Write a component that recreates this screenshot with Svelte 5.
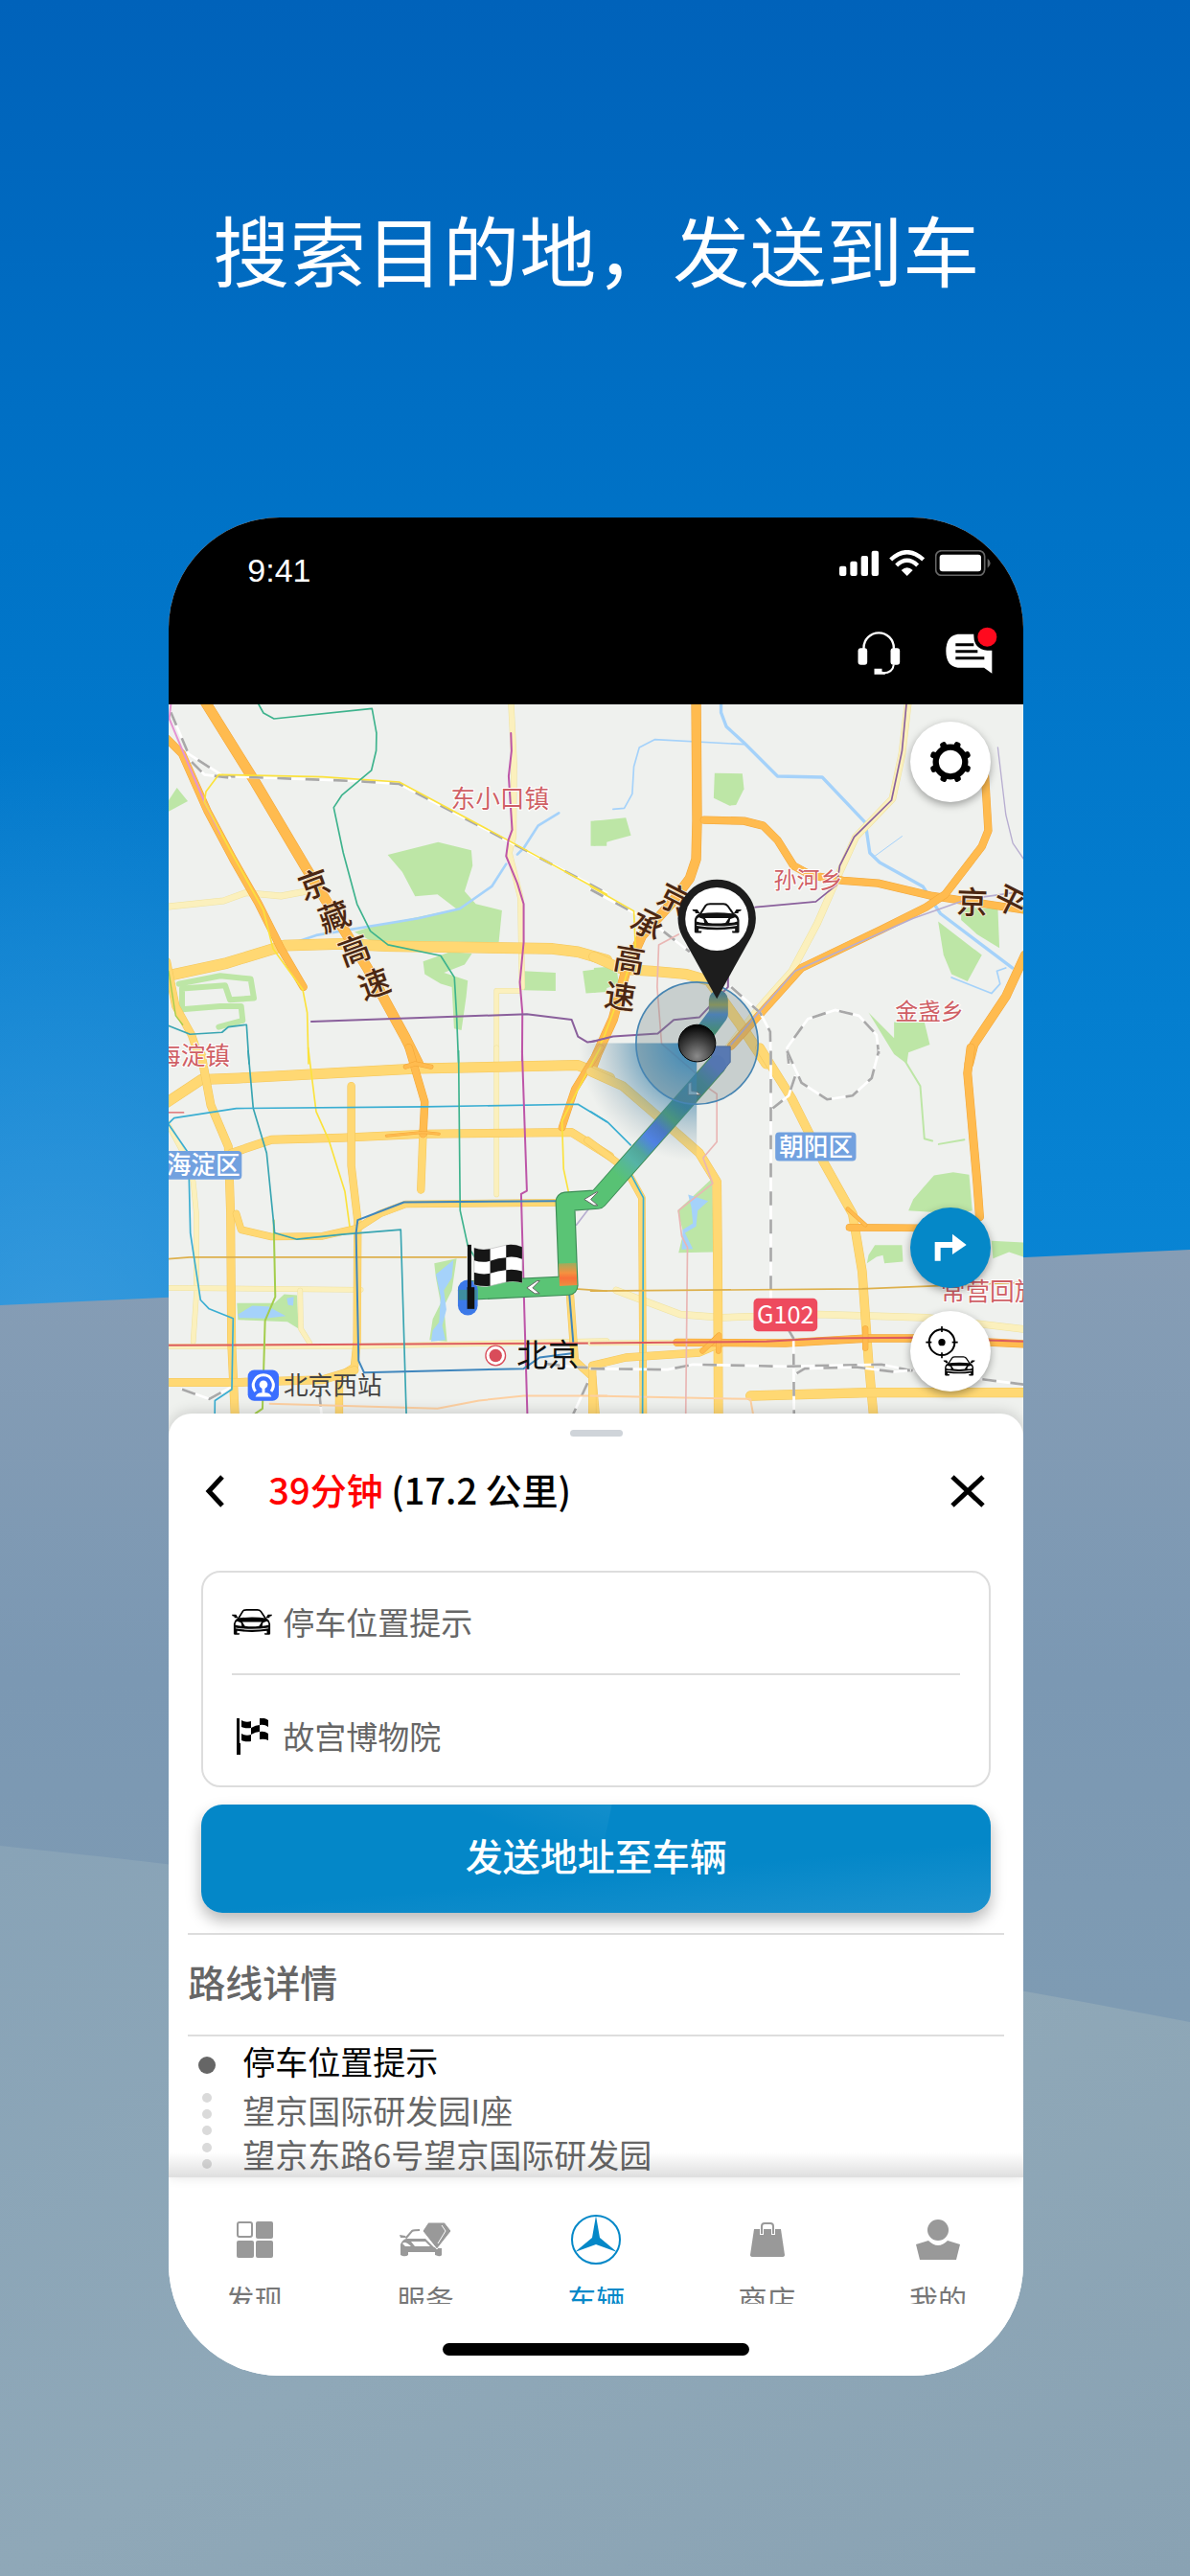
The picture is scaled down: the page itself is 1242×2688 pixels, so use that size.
<script>
let origin = $state('停车位置提示');
let destination = $state('故宫博物院');
let activeTab = $state('car');

const stops = [
     {
          title: '停车位置提示',
          lines: ['望京国际研发园I座', '望京东路6号望京国际研发园']
     }
];

const tabs = [
     { id: 'discover', label: '发现' },
     { id: 'service', label: '服务' },
     { id: 'car', label: '车辆' },
     { id: 'shop', label: '商店' },
     { id: 'me', label: '我的' }
];

// stroke colour and default width of every kind of line on the map
const kinds = {
     water: ['#a5d2fa', 8],
     park: ['#bde6a6', 8],
     pale: ['#fbf0bd', 18],
     main: ['#ffd873', 30],
     highway: ['#ffbb4f', 28],
     rail: ['#ffffff', 8],
     yellow: ['#fbe23c', 5],
     green: ['#3eb38d', 5],
     lime: ['#a3cd4c', 6],
     teal: ['#38a5b2', 5],
     cyan: ['#3aaed2', 5],
     blue: ['#3f86bd', 7],
     magenta: ['#bd55a8', 6],
     purple: ['#8a609c', 6],
     lavender: ['#b7add0', 5],
     pink: ['#e493d4', 6],
     rose: ['#e9b6b4', 5],
     gold: ['#ddb04c', 5],
     red: ['#dc5c60', 6],
     peach: ['#fdd0a2', 6]
};
const cased = ['pale', 'main', 'highway'];
const casing = { pale: '#efe2a0', main: '#f3c65c', highway: '#f2a638' };

const tiles = [
     {
          x: 0,
          y: 0,
          parks: [
               '704,486 862,446 966,472 970,520 945,600 980,640 1062,660 1052,760 650,755 600,728 650,712 920,656 860,610 790,616 750,540',
               '18,316 44,276 78,318 18,350',
               '815,820 900,790 968,795 945,830 880,855 955,880 950,930 935,1035 912,1030 905,900 870,890 820,860',
               '1130,850 1230,855 1230,912 1130,910',
               '1315,850 1390,840 1390,915 1325,920',
               '1340,380 1390,378 1390,458 1340,458'
          ],
          lakes: [],
          lines: [
               ['park', '50,890 180,865 275,875 285,935 210,940 195,895 60,905 60,970 180,960 245,960 250,1005 175,1025', 18],
               ['water', '400,765 480,738 800,685 930,655 1030,585 1075,515', 8],
               ['water', '1110,485 1130,465 1175,395 1240,355', 8],
               ['pale', '0,650 190,630 260,605 370,615 450,600', 18],
               ['pale', '1090,0 1100,200 1098,430 1085,480 1120,620 1125,900', 16],
               ['pale', '1115,912 1045,912 1045,1140', 14],
               ['main', '0,868 200,825 380,770 560,765 700,772 1220,780 1300,790 1390,816', 32],
               ['main', '12,820 40,960 90,1050 120,1140', 22],
               ['highway', '128,0 290,260 450,530 640,840 760,1060 800,1140', 30],
               ['highway', '0,110 60,170 140,350 220,500 300,640 370,780 440,900', 22],
               ['rail', '25,40 80,170 190,240 600,255 740,264 1390,606'],
               ['rail', '90,195 130,235 210,245'],
               ['pink', '25,15 20,60 70,180 130,320 180,420'],
               ['yellow', '456,1140 452,980 438,908 345,780 315,660 210,470 130,320 135,288 175,235 500,242 740,258 1080,440 1390,610'],
               ['green', '300,15 315,42 348,60 655,28 669,105 668,160 653,222 560,300 535,338 565,480 608,640 650,725 705,768 870,802 913,870 920,990 926,1140'],
               ['magenta', '1090,105 1092,160 1083,240 1094,408 1082,440 1075,490 1110,575 1130,640 1130,760 1118,885 1126,980 1125,1140'],
               ['purple', '465,1008 1140,985 1280,1002 1300,1055 1330,1073 1390,1064'],
               ['teal', '0,1014 85,1048 185,1042 205,1025 262,1018 270,1140'],
               ['lime', '18,850 40,990 62,1018', 4]
          ]
     },
     {
          x: 1350,
          y: 0,
          parks: [
               '378,230 465,232 470,280 445,330 425,332 375,308',
               '0,380 100,370 116,425 60,440 0,458',
               '0,840 70,835 78,890 0,918',
               '1150,650 1265,655 1270,778 1200,735 1150,690',
               '1078,695 1215,800 1170,882 1120,860 1095,800',
               '940,1010 1035,1010 1052,1080 985,1105 980,1140 940,1110 860,980 940,1060'
          ],
          lakes: [],
          lines: [
               ['water', '398,0 398,40 415,85 470,135 575,240 715,243 850,385 864,480 895,510 1030,585 1085,670 1310,840', 10],
               ['water', '470,140 190,125 142,150 125,210 120,295 95,340 60,343', 5],
               ['water', '880,490 965,428', 3],
               ['water', '1120,870 1245,920 1272,890 1262,850 1290,840', 5],
               ['pale', '985,0 965,170 935,310 820,430 770,540 700,700 620,850 540,940 490,1000 420,1090', 20],
               ['main', '0,805 90,845 180,850 290,860 360,880 460,1020 540,1140', 30],
               ['highway', '320,0 323,380 320,500 300,560 240,640 150,740 100,850 60,1000 10,1110 -5,1150', 28],
               ['highway', '345,377 470,380 530,395 575,440 625,520 680,550 780,567 890,575 1060,615 1360,660', 22],
               ['highway', '1225,240 1235,410 1215,460 1100,610 1040,650 900,720 650,840 520,985 430,1085', 22],
               ['highway', '1350,800 1290,930 1190,1080 1175,1140', 26],
               ['rail', '-10,595 130,670 210,720 300,790'],
               ['rail', '430,900 520,980 552,1040 554,1140'],
               ['rail', '610,1140 605,1090 670,1000 755,972 830,990 885,1050 892,1110'],
               ['yellow', '-10,585 125,662 130,770 90,900 30,1060 -5,1130'],
               ['rose', '265,735 203,768 198,900 212,1078 330,1180'],
               ['purple', '980,0 965,160 932,315 815,430 770,520 760,580 695,633 505,650', 5],
               ['purple', '-10,1072 60,1055 200,1046 250,1003 330,995 420,900 420,850'],
               ['lavender', '1265,150 1290,360 1312,450 1350,505', 4],
               ['lavender', '1350,600 1170,625 1000,685 630,850 520,975 430,1080']
          ]
     },
     {
          x: 0,
          y: 1110,
          parks: [
               '232,780 350,780 380,752 420,755 425,860 390,838 235,832',
               '850,655 920,640 905,740 880,790 890,900 835,895 845,830 870,780 855,700'
          ],
          lakes: [
               '235,815 280,788 330,790 385,820 320,828 240,826',
               '855,690 910,645 905,700 880,740 888,800 875,850 885,895 840,900 845,865 865,840 870,760',
               '388,765 410,760 408,788 392,786'
          ],
          lines: [
               ['pale', '0,190 75,330 95,400 105,500 105,750 95,900', 14],
               ['pale', '1045,-20 1045,440', 14],
               ['pale', '0,732 620,738', 14],
               ['pale', '430,740 432,860 460,905', 14],
               ['pale', '0,915 600,915 1390,898', 14],
               ['main', '0,160 120,80 240,75 800,45 1300,35 1400,75', 30],
               ['main', '120,0 150,160 205,290 212,500 215,900 228,1180', 24],
               ['main', '215,310 340,268 560,262 820,250 1280,245 1400,320', 24],
               ['main', '590,100 590,350 610,520 608,900 600,980 552,1010 552,1180', 22],
               ['main', '230,500 245,550 340,572 500,570 610,545 680,500 760,470 1230,465', 20],
               ['main', '815,240 808,425', 22],
               ['main', '0,1028 240,1028 500,1020 600,990', 24],
               ['main', '1275,750 1290,960 1345,1010 1360,1180', 22],
               ['highway', '770,-20 820,150 815,250', 22],
               ['highway', '760,40 790,30 840,40', 12],
               ['highway', '700,256 815,245 865,250', 6],
               ['highway', '1370,-20 1290,110 1250,230', 20],
               ['rail', '60,1050 145,1080 210,1045'],
               ['rail', '490,1060 500,1160'],
               ['rail', '1200,970 1290,980 1390,985'],
               ['rail', '1330,1030 1270,1160'],
               ['peach', '335,1095 860,1110 990,1085 1130,1070 1390,1070'],
               ['yellow', '455,-20 480,180 520,270 570,430 585,540'],
               ['yellow', '1370,-20 1300,110 1250,210 1255,360 1270,430'],
               ['lavender', '1295,535 1345,470'],
               ['red', '0,912 1390,905'],
               ['red', '0,183 65,183', 4],
               ['gold', '0,643 85,636 950,636'],
               ['gold', '1290,735 1390,742'],
               ['lime', '347,520 352,760 320,835 312,1110 290,1125'],
               ['teal', '267,-10 283,170 325,310 350,560 420,580 560,565 745,550 764,1180'],
               ['cyan', '-10,245 35,200 230,170 820,165 1300,157 1390,212'],
               ['cyan', '18,220 80,310 86,560 118,770 145,798 220,828 216,1050 163,1085 162,1180'],
               ['green', '926,-10 931,490 955,600 985,650'],
               ['magenta', '1125,-10 1140,428 1122,438 1132,800 1143,1180'],
               ['blue', '1230,460 755,464 610,520 605,560 613,960 630,997 1130,985 1180,950 1280,937', 6],
               ['blue', '1272,740 1285,900', 6]
          ]
     },
     {
          x: 1350,
          y: 1110,
          parks: [
               '985,490 1000,455 1030,420 1065,380 1125,370 1175,378 1185,490 1140,500',
               '855,655 860,630 880,598 965,598 968,650 910,655 905,630 885,635',
               '1245,585 1345,590 1345,635 1300,620 1250,640',
               '262,490 370,390 375,620 265,622 280,560'
          ],
          lakes: ['295,440 358,460 325,490 320,540 285,560 310,610 275,612 278,550 310,530 305,480'],
          lines: [
               ['park', '955,-10 1022,100 1035,265 1060,272', 6],
               ['park', '1080,282 1160,268', 6],
               ['pale', '70,740 270,815 400,825 700,815 1040,825 1350,862', 20],
               ['pale', '-10,905 250,903', 14],
               ['main', '-10,55 90,100 200,195 330,310 385,400 388,700 390,1180', 26],
               ['main', '-20,270 100,360 150,450 155,1180', 20],
               ['main', '520,-20 620,140 720,340 810,500 840,680 860,960 880,1180', 26],
               ['main', '-5,1180 -5,975 100,950 330,935 400,905', 22],
               ['main', '490,1070 860,1060 1350,1060', 28],
               ['highway', '260,903 600,905 860,890 1000,890 1350,908', 22],
               ['highway', '340,930 392,880 390,930', 14],
               ['highway', '850,860 850,920', 16],
               ['highway', '800,543 1100,545', 20],
               ['highway', '795,485 850,535', 10],
               ['highway', '1180,-20 1170,60 1200,400 1208,510', 24],
               ['rail', '605,-10 650,90 730,142 810,130 870,75 892,-10'],
               ['rail', '630,70 610,130 560,170'],
               ['rail', '554,-10 554,770 625,890 627,1180'],
               ['rail', '-10,985 230,988 310,972 600,978 900,972 990,990 1350,1035'],
               ['rail', '635,1000 660,985 820,980 940,995 990,990'],
               ['peach', '-10,1070 490,1080 508,1180'],
               ['cyan', '-10,180 45,215 115,285'],
               ['cyan', '115,375 155,450 152,1180'],
               ['rose', '320,80 385,125 385,275 342,325 372,405 265,490 275,570 293,605 287,1180'],
               ['gold', '-10,742 840,735 1350,715'],
               ['red', '-10,905 540,900 720,890 1000,888 1350,900']
          ]
     }
];

const places = [
     { text: '东小口镇', x: 902, y: 340 },
     { text: '海淀镇', x: -21, y: 1142 },
     { text: '孙河乡', x: 1913, y: 592 },
     { text: '金盏乡', x: 2293, y: 1001 },
     { text: '常营回族', x: 2436, y: 1880 }
];

const roadNames = [
     { text: '京', x: 475, y: 580, turn: -20 },
     { text: '藏', x: 538, y: 682, turn: -20 },
     { text: '高', x: 600, y: 787, turn: -20 },
     { text: '速', x: 663, y: 892, turn: -20 },
     { text: '京', x: 1600, y: 626, turn: 27 },
     { text: '承', x: 1516, y: 706, turn: 27 },
     { text: '高', x: 1461, y: 816, turn: 10 },
     { text: '速', x: 1432, y: 931, turn: 8 },
     { text: '京', x: 2535, y: 636, turn: 2 },
     { text: '平', x: 2655, y: 632, turn: 27 }
];

const teeth = [22, 67, 112, 157, 202, 247, 292, 337];
</script>

{#snippet car()}
     <path d="M24 36 L42 8 Q46 3 56 3 H98 Q106 3 111 9 L130 36" fill="none" stroke="currentColor" stroke-width="6" />
     <path d="M0 20 H16 L24 32 H10 L9 27 L2 25Z M154 20 H138 L130 32 H144 L145 27 L152 25Z" fill="currentColor" />
     <path d="M20 34 Q77 26 134 34 Q146 42 147 54 V90 Q147 94 142 94 H126 L124 88 H134 V80 Q77 88 20 80 V88 H30 L28 94 H12 Q7 94 7 90 V54 Q8 42 20 34Z" fill="currentColor" />
     <path d="M13 58 Q13 48 20 45 L35 50 L38 62 Q22 62 13 58Z M141 58 Q141 48 134 45 L119 50 L116 62 Q132 62 141 58Z" fill="#fff" />
     <path d="M40 47 H114 L104 62 Q77 66 50 62Z" fill="#fff" />
     <path d="M14 68 Q77 78 140 68 V71 Q77 82 14 71Z" fill="#fff" />
{/snippet}

<div class="page">
     <svg class="backdrop" viewBox="0 0 1242 2688" preserveAspectRatio="none" aria-hidden="true">
          <defs>
               <linearGradient id="sky" x1="0" y1="0" x2="0" y2="1">
                    <stop offset="0" stop-color="#0062ba" />
                    <stop offset="0.4" stop-color="#0073c7" />
                    <stop offset="0.75" stop-color="#047ecf" />
                    <stop offset="1" stop-color="#0a86d5" />
               </linearGradient>
               <radialGradient id="glow" gradientUnits="userSpaceOnUse" cx="60" cy="1400" r="620">
                    <stop offset="0" stop-color="#4aa2e0" stop-opacity="0.7" />
                    <stop offset="1" stop-color="#4aa2e0" stop-opacity="0" />
               </radialGradient>
               <linearGradient id="hill" x1="0" y1="0" x2="0" y2="1">
                    <stop offset="0" stop-color="#869db5" />
                    <stop offset="0.5" stop-color="#7b98b3" />
                    <stop offset="1" stop-color="#7f9cb3" />
               </linearGradient>
               <linearGradient id="ground" x1="0" y1="0" x2="1" y2="1">
                    <stop offset="0" stop-color="#88a3b7" />
                    <stop offset="0.5" stop-color="#8fa8b8" />
                    <stop offset="1" stop-color="#89a2b3" />
               </linearGradient>
          </defs>
          <rect width="1242" height="1400" fill="url(#sky)" />
          <rect width="1242" height="1400" fill="url(#glow)" />
          <path d="M0 1362 L1242 1304 V2200 H0Z" fill="url(#hill)" />
          <path d="M0 1926 Q620 1990 1242 2110 V2688 H0Z" fill="url(#ground)" />
     </svg>

     <h1>搜索目的地，发送到车</h1>

     <main class="phone">
          <header>
               <div class="status">
                    <span class="time">9:41</span>
                    <div class="signals">
                         <svg width="41" height="27" viewBox="42 42 123 81" aria-hidden="true">
                              <g fill="#fff">
                                   <rect x="42" y="92" width="22" height="31" rx="6" />
                                   <rect x="76" y="77" width="22" height="46" rx="6" />
                                   <rect x="110" y="60" width="22" height="63" rx="6" />
                                   <rect x="143" y="44" width="22" height="79" rx="6" />
                              </g>
                         </svg>
                         <svg width="37" height="27" viewBox="199 41 111 81" aria-hidden="true">
                              <g fill="none" stroke="#fff" stroke-width="13">
                                   <path d="M204 71 Q255 24 306 71" />
                                   <path d="M222 89 Q255 58 288 89" />
                              </g>
                              <path d="M237 104 Q255 88 273 104 L255 122Z" fill="#fff" />
                         </svg>
                         <svg width="58" height="27" viewBox="346 42 174 81" aria-hidden="true">
                              <rect x="348" y="44" width="153" height="77" rx="18" fill="none" stroke="#666" stroke-width="5" />
                              <rect x="360" y="56" width="130" height="53" rx="9" fill="#fff" />
                              <path d="M510 68 Q519 75 519 83 Q519 91 510 98Z" fill="#666" />
                         </svg>
                    </div>
               </div>
               <div class="actions">
                    <button type="button" aria-label="客服">
                         <svg width="45" height="50" viewBox="104 280 134 150">
                              <path d="M123 350 V346 A47 47 0 0 1 217 346 V350" fill="none" stroke="#fff" stroke-width="7" />
                              <rect x="105" y="347" width="29" height="52" rx="9" fill="#fff" />
                              <rect x="207" y="347" width="29" height="52" rx="9" fill="#fff" />
                              <path d="M217 398 Q214 424 184 425" fill="none" stroke="#fff" stroke-width="6" />
                              <path d="M156 411 H180 V420 L190 422 V429 H156Z" fill="#fff" />
                         </svg>
                    </button>
                    <button type="button" aria-label="消息">
                         <svg width="54" height="50" viewBox="380 280 162 150">
                              <path d="M418 303 H468 Q466 350 510 354 H525 V426 L500 408 H418 Q381 404 381 356 Q381 308 418 303Z" fill="#fff" />
                              <path d="M411 336 H468 M411 357 H480 M411 378 H501" stroke="#000" stroke-width="9" />
                              <circle cx="510" cy="312" r="30" fill="#ff0a1e" />
                         </svg>
                    </button>
               </div>
          </header>

          <section class="map">
               <svg class="canvas" viewBox="18 15 2676 2292" role="img" aria-label="地图">
                    <defs>
                         <linearGradient id="traffic" gradientUnits="userSpaceOnUse" x1="1360" y1="1550" x2="1750" y2="1130">
                              <stop offset="0.15" stop-color="#58c274" />
                              <stop offset="0.27" stop-color="#56b3a6" />
                              <stop offset="0.33" stop-color="#51a79a" />
                              <stop offset="0.42" stop-color="#4a7fea" />
                              <stop offset="0.5" stop-color="#3f70cc" />
                              <stop offset="0.58" stop-color="#3f9a62" />
                              <stop offset="0.68" stop-color="#2b7585" />
                              <stop offset="0.84" stop-color="#337f92" />
                              <stop offset="0.95" stop-color="#4a72c4" />
                         </linearGradient>
                         <linearGradient id="jam" gradientUnits="userSpaceOnUse" x1="0" y1="1740" x2="0" y2="1850">
                              <stop offset="0" stop-color="#58c274" />
                              <stop offset="0.5" stop-color="#f59140" />
                              <stop offset="0.65" stop-color="#f9713a" />
                              <stop offset="1" stop-color="#e8a045" />
                         </linearGradient>
                         <linearGradient id="start" gradientUnits="userSpaceOnUse" x1="0" y1="920" x2="0" y2="1040">
                              <stop offset="0" stop-color="#3a7c96" />
                              <stop offset="0.3" stop-color="#8f9a50" />
                              <stop offset="0.55" stop-color="#3f80c8" />
                              <stop offset="1" stop-color="#35906e" />
                         </linearGradient>
                         <radialGradient id="cone" gradientUnits="userSpaceOnUse" cx="1672" cy="1076" r="370">
                              <stop offset="0" stop-color="#007ccf" stop-opacity="0.9" />
                              <stop offset="0.5" stop-color="#3f85ad" stop-opacity="0.6" />
                              <stop offset="1" stop-color="#8a9ba3" stop-opacity="0" />
                         </radialGradient>
                         <radialGradient id="ball" cx="0.5" cy="0.85" r="0.8">
                              <stop offset="0" stop-color="#8a8a8a" />
                              <stop offset="0.6" stop-color="#3a3a3a" />
                              <stop offset="1" stop-color="#080808" />
                         </radialGradient>
                    </defs>
                    <rect x="18" y="15" width="2676" height="2292" fill="#eff1ee" />

                    {#each tiles as tile}
                         <g transform="translate({tile.x} {tile.y})">
                              {#each tile.parks as points}
                                   <polygon {points} fill="#bde6a6" />
                              {/each}
                              {#each tile.lakes as points}
                                   <polygon {points} fill="#a5d2fa" />
                              {/each}
                         </g>
                    {/each}
                    {#each tiles as tile}
                         <g transform="translate({tile.x} {tile.y})" fill="none" stroke-linejoin="round" stroke-linecap="round">
                              {#each tile.lines as [kind, points, width]}
                                   {#if cased.includes(kind)}
                                        <polyline {points} stroke={casing[kind]} stroke-width={width + 3} />
                                   {/if}
                                   <polyline {points} stroke={kinds[kind][0]} stroke-width={width ?? kinds[kind][1]} />
                                   {#if kind == 'rail'}
                                        <polyline {points} stroke="#a8a8a8" stroke-width="8" stroke-dasharray="44 44" stroke-linecap="butt" />
                                   {/if}
                              {/each}
                         </g>
                    {/each}

                    <g class="place">
                         {#each places as place}
                              <text x={place.x} y={place.y}>{place.text}</text>
                         {/each}
                    </g>
                    <g class="road-name">
                         {#each roadNames as name}
                              <text transform="translate({name.x} {name.y}) rotate({name.turn})" y="34">{name.text}</text>
                         {/each}
                    </g>

                    <rect x="-30" y="1413" width="277" height="90" rx="12" fill="#72a1df" />
                    <text class="district" x="11" y="1486">海淀区</text>
                    <rect x="1918" y="1355" width="253" height="90" rx="12" fill="#72a1df" />
                    <text class="district" x="1930" y="1428">朝阳区</text>
                    <rect x="1850" y="1875" width="200" height="103" rx="14" fill="#ee4b5e" />
                    <text class="shield" x="1950" y="1953">G102</text>

                    <circle cx="1042" cy="2054" r="31" fill="#fff" stroke="#d94c5a" stroke-width="4" />
                    <circle cx="1042" cy="2054" r="20" fill="#d94c5a" />
                    <text class="city" x="1108" y="2090">北京</text>
                    <rect x="266" y="2099" width="97" height="97" rx="20" fill="#3a6eff" />
                    <path d="M290 2166 Q278 2150 286 2134 Q295 2115 315 2115 Q335 2115 343 2134 Q351 2150 339 2166 M315 2140 V2172" fill="none" stroke="#fff" stroke-width="9" />
                    <circle cx="315" cy="2145" r="13" fill="#fff" />
                    <path d="M290 2183 Q294 2170 310 2170 H320 Q336 2170 340 2183Z" fill="#fff" />
                    <text class="station" x="378" y="2177">北京西站</text>

                    <!-- planned route with live traffic -->
                    <g fill="none" stroke-linejoin="round" stroke-linecap="round">
                         <path d="M955 1850 L1270 1835 L1260 1572 L1362 1565 L1735 1142" stroke="#3d8c56" stroke-width="62" />
                         <path d="M1708 1100 L1725 1086 H1777 V1135 L1752 1166Z" fill="#4f76c6" stroke="#3d62a8" stroke-width="3" />
                         <path d="M955 1850 L1270 1835 L1260 1572 L1362 1565" stroke="#5ac475" stroke-width="55" />
                         <path d="M1362 1565 L1735 1142" stroke="url(#traffic)" stroke-width="56" />
                         <path d="M1267 1765 L1270 1835" stroke="url(#jam)" stroke-width="55" stroke-linecap="butt" />
                         <path d="M955 1848 V1897" stroke="#3c79e8" stroke-width="62" />
                         <path d="M955 1848 V1880" stroke="#3f8da0" stroke-width="58" stroke-linecap="butt" />
                         <path d="M1672 1076 L1740 985 V940" stroke="url(#start)" stroke-width="60" />
                    </g>
                    <g fill="#fff" stroke="#666" stroke-width="3">
                         <path d="M1358 1542 L1320 1565 L1350 1584 H1362 L1340 1565 L1362 1542Z" />
                         <path d="M1172 1820 L1140 1842 L1165 1860 H1180 L1158 1842 L1180 1820Z" />
                         <path d="M1645 1202 V1238 H1685 L1672 1228 L1656 1226 V1198Z" />
                    </g>

                    <path d="M1672 1076 H1302 A370 370 0 0 0 1672 1446Z" fill="url(#cone)" />
                    <circle cx="1673" cy="1076" r="191" fill="#6c8084" fill-opacity="0.3" stroke="#4785b2" stroke-width="5" />
                    <circle cx="1673" cy="1076" r="58" fill="url(#ball)" stroke="#000" stroke-width="3" />

                    <!-- parked car -->
                    <path d="M1735 937 L1628 744 A122 122 0 1 1 1842 744Z" fill="#1d1d1d" />
                    <circle cx="1735" cy="687" r="99" fill="#fff" />
                    <g transform="translate(1658 637)" color="#111">{@render car()}</g>

                    <!-- destination flag -->
                    <rect x="954" y="1707" width="12" height="140" fill="#111" />
                    <rect x="953" y="1840" width="23" height="68" fill="#111" />
                    <path d="M975 1717 Q1000 1726 1025 1720 T1075 1708 T1125 1714 V1826 Q1100 1818 1075 1824 T1025 1836 T975 1832Z" fill="#fff" stroke="#bbb" stroke-width="2" />
                    <path
                         d="M975 1717 Q1000 1726 1025 1720 V1758 Q1000 1764 975 1756Z M1075 1708 Q1100 1704 1125 1714 V1752 Q1100 1742 1075 1747Z M1025 1758 Q1050 1748 1075 1747 V1786 Q1050 1788 1025 1797Z M975 1794 Q1000 1802 1025 1797 V1836 Q1000 1838 975 1832Z M1075 1786 Q1100 1782 1125 1790 V1826 Q1100 1818 1075 1824Z"
                         fill="#161616"
                    />
               </svg>

               <div class="map-buttons">
                    <button type="button" class="round" aria-label="设置">
                         <svg width="44" height="44" viewBox="-66 -66 132 132">
                              <circle r="46" fill="none" stroke="#000" stroke-width="19" />
                              {#each teeth as angle}
                                   <rect x="-10" y="-66" width="20" height="24" rx="7" transform="rotate({angle})" />
                              {/each}
                         </svg>
                    </button>
                    <button type="button" class="round blue" aria-label="导航">
                         <svg width="34" height="30" viewBox="0 0 102 90">
                              <path d="M11 86 V36 H58" fill="none" stroke="#fff" stroke-width="18" />
                              <path d="M57 2 L101 36 L57 66Z" fill="#fff" />
                         </svg>
                    </button>
                    <button type="button" class="round" aria-label="定位车辆">
                         <svg width="52" height="52" viewBox="0 0 156 156">
                              <circle cx="51" cy="50" r="40" fill="none" stroke="#000" stroke-width="6" />
                              <circle cx="51" cy="50" r="11" />
                              <path d="M51 0 V18 M51 82 V100 M1 50 H19 M83 50 H101" stroke="#000" stroke-width="5" />
                              <g transform="translate(56 94) scale(0.64)">{@render car()}</g>
                         </svg>
                    </button>
               </div>
          </section>

          <section class="sheet">
               <div class="handle"></div>
               <div class="summary">
                    <button type="button" aria-label="返回">
                         <svg width="20" height="34" viewBox="0 0 20 34"><path d="M18 2 L4 17 L18 32" fill="none" stroke="#000" stroke-width="5" /></svg>
                    </button>
                    <h2><strong>39分钟</strong> (17.2 公里)</h2>
                    <button type="button" aria-label="关闭">
                         <svg width="36" height="34" viewBox="0 0 36 34"><path d="M2 2 L34 32 M34 2 L2 32" stroke="#000" stroke-width="5" /></svg>
                    </button>
               </div>

               <div class="card">
                    <label>
                         <svg width="42" height="28" viewBox="0 0 154 98" preserveAspectRatio="none" aria-hidden="true">{@render car()}</svg>
                         <input type="text" aria-label="起点" bind:value={origin}>
                    </label>
                    <label class="to">
                         <svg width="42" height="38" viewBox="0 0 42 38" aria-hidden="true">
                              <path d="M5 0 H8 V26 H9 V38 H5Z" />
                              <path d="M10 2 Q15 5 20 3 V10 Q15 11 10 9Z M29 0 Q34 -1 38 2 V9 Q34 6 29 7Z M20 10 Q25 7 29 7 V14 Q25 14 20 17Z M10 16 Q15 19 20 17 V24 Q15 25 10 23Z M29 14 Q34 13 38 16 V23 Q34 21 29 22Z" />
                         </svg>
                         <input type="text" aria-label="终点" bind:value={destination}>
                    </label>
               </div>

               <button type="button" class="send">发送地址至车辆</button>

               <div class="details">
                    <h3>路线详情</h3>
                    {#each stops as stop}
                         <div class="stop">
                              <svg width="40" height="147" viewBox="0 0 40 147" aria-hidden="true">
                                   <circle cx="20" cy="30" r="9" fill="#666" />
                                   {#each [64, 81, 98, 116, 133] as cy}
                                        <circle cx="20" {cy} r="5" fill="#dadada" />
                                   {/each}
                              </svg>
                              <div>
                                   <h4>{stop.title}</h4>
                                   {#each stop.lines as line}
                                        <p>{line}</p>
                                   {/each}
                              </div>
                         </div>
                    {/each}
               </div>
          </section>

          <nav>
               <div class="tabs">
                    {#each tabs as tab}
                         <a href="#{tab.id}" class:active={activeTab == tab.id} onclick={() => (activeTab = tab.id)}>
                              <span class="icon">
                                   {#if tab.id == 'discover'}
                                        <svg width="40" height="40" viewBox="0 0 40 40">
                                             <rect x="2" y="2" width="15" height="15" rx="2" fill="#fff" stroke="currentColor" stroke-width="2" />
                                             <rect x="21" y="1" width="18" height="18" rx="2" />
                                             <rect x="1" y="21" width="18" height="18" rx="2" />
                                             <rect x="21" y="21" width="18" height="18" rx="2" />
                                        </svg>
                                   {:else if tab.id == 'service'}
                                        <svg width="54" height="36" viewBox="0 0 54 36">
                                             <path d="M7 16 L13 9 Q15 8 21 8" fill="none" stroke="currentColor" stroke-width="2" />
                                             <path d="M0 13 L6 14 L8 17 H27 L36 26 L42 27 H44 V34 Q43 36 40 35 L37 34 V31 H9 V34 Q7 36 3 35 L1 34 V23 Q3 18 7 17 L6 16 H1Z" />
                                             <path d="M3 22 Q6 19 12 25 L6 25Z M12 20 H27 L32 25 H16Z" fill="#fff" />
                                             <path d="M30 0 H47 L54 9 L39 28 L24 9Z" stroke="#fff" stroke-width="1" />
                                             <path d="M44 3 L48 9 L40 22" fill="none" stroke="#fff" stroke-width="1" />
                                        </svg>
                                   {:else if tab.id == 'car'}
                                        <svg width="54" height="54" viewBox="0 0 54 54">
                                             <circle cx="27" cy="27" r="25" fill="none" stroke="currentColor" stroke-width="2" />
                                             <path d="M27 2 L31 25 L49 40 L27 32 L5 40 L23 25Z" />
                                        </svg>
                                   {:else if tab.id == 'shop'}
                                        <svg width="38" height="38" viewBox="0 0 38 38">
                                             <path d="M5 8 H33 L37 35 Q37 37 34 37 H4 Q1 37 1 35Z" />
                                             <path d="M13 14 V5 Q13 2 16 2 H22 Q25 2 25 5 V14" fill="none" stroke="#fff" stroke-width="4" />
                                             <path d="M13 13 V5 Q13 2 16 2 H22 Q25 2 25 5 V13" fill="none" stroke="currentColor" stroke-width="2" />
                                        </svg>
                                   {:else}
                                        <svg width="48" height="42" viewBox="0 0 48 42">
                                             <ellipse cx="24" cy="11" rx="11" ry="11" />
                                             <path d="M1 26 L14 22 Q24 32 34 22 L47 26 L43 42 H5Z" />
                                        </svg>
                                   {/if}
                              </span>
                              <span class="label">{tab.label}</span>
                         </a>
                    {/each}
               </div>
               <div class="home-bar"></div>
          </nav>
     </main>
</div>

<style>
     :global(body) {
          background: #8ea7b7;
     }
     .page {
          position: relative;
          box-sizing: border-box;
          min-height: 100vh;
          padding: 198px 14% 208px 14.2%;
          font-family: "Noto Sans CJK SC", sans-serif;
     }
     .backdrop {
          position: absolute;
          inset: 0;
          width: 100%;
          height: 100%;
     }
     h1, h2, h3, h4, p {
          margin: 0;
          font-weight: 400;
     }
     h1 {
          position: relative;
          color: #fff;
          font-size: 80px;
          line-height: 120px;
          text-align: center;
          white-space: nowrap;
     }
     button {
          padding: 0;
          border: 0;
          background: none;
          font-family: inherit;
     }
     svg {
          display: block;
     }
     .phone {
          position: relative;
          margin-top: 222px;
          overflow: hidden;
          border-radius: 116px;
          background: #fff;
     }
     header {
          padding: 34px 0 31px;
          background: #000;
     }
     .status {
          display: flex;
          align-items: flex-start;
          justify-content: space-between;
          padding: 0 34px 0 82px;
     }
     .time {
          color: #fff;
          font-family: "Liberation Sans", sans-serif;
          font-size: 34px;
          line-height: 42px;
     }
     .signals {
          display: flex;
          gap: 11px;
     }
     .actions {
          display: flex;
          justify-content: flex-end;
          gap: 47px;
          margin-top: 38px;
          padding-right: 27px;
     }
     .map {
          position: relative;
     }
     .canvas {
          width: 100%;
          height: auto;
     }
     .place text {
          fill: #cf5f65;
          font-size: 77px;
          stroke: #fff;
          stroke-width: 6px;
          paint-order: stroke;
     }
     .place text:nth-child(3), .place text:nth-child(4) {
          font-size: 72px;
     }
     .road-name text {
          fill: #4b2712;
          font-size: 98px;
          font-weight: 500;
          text-anchor: middle;
          stroke: #f8ead2;
          stroke-width: 5px;
          paint-order: stroke;
     }
     .district {
          fill: #fff;
          font-size: 77px;
          font-weight: 500;
     }
     .shield {
          fill: #fff;
          font-size: 76px;
          text-anchor: middle;
     }
     .city {
          fill: #111;
          font-size: 98px;
     }
     .station {
          fill: #444;
          font-size: 77px;
     }
     .map-buttons {
          position: absolute;
          top: 18px;
          right: 34px;
          display: flex;
          flex-direction: column;
          gap: 24px;
     }
     .round {
          display: grid;
          place-items: center;
          width: 84px;
          height: 84px;
          border-radius: 50%;
          background: #fff;
          box-shadow: 0 3px 8px rgba(0, 0, 0, 0.35);
     }
     .blue {
          margin-top: 399px;
          background: #0588c8;
     }
     .sheet {
          position: relative;
          margin-top: -24px;
          padding: 17px 20px 0;
          border-radius: 24px 24px 0 0;
          background: #fff;
          box-shadow: 0 -2px 14px rgba(0, 0, 0, 0.15);
     }
     .sheet::after {
          content: "";
          position: absolute;
          inset: auto 0 0;
          height: 26px;
          background: linear-gradient(rgba(0, 0, 0, 0), rgba(0, 0, 0, 0.13));
     }
     .handle {
          width: 55px;
          height: 7px;
          margin: 0 auto;
          border-radius: 4px;
          background: #cfd4d9;
     }
     .summary {
          display: flex;
          align-items: center;
          height: 60px;
          margin: 27px 20px 53px 18px;
     }
     h2 {
          flex: 1;
          margin-left: 46px;
          color: #000;
          font-size: 38px;
          font-weight: 500;
          line-height: 56px;
          padding-bottom: 4px;
     }
     strong {
          color: #f00;
          font-weight: 500;
     }
     .card {
          margin: 0 14px;
          padding: 0 30px;
          border: 2px solid #ddd;
          border-radius: 20px;
     }
     label {
          display: flex;
          align-items: center;
          gap: 11px;
          height: 105px;
     }
     .to {
          height: 101px;
          padding-top: 14px;
          border-top: 2px solid #ddd;
     }
     input {
          flex: 1;
          min-width: 0;
          padding: 0 0 2px;
          border: 0;
          background: none;
          color: #666;
          font-family: inherit;
          font-size: 33px;
          line-height: 48px;
          outline: none;
     }
     .send {
          position: relative;
          display: block;
          width: calc(100% - 28px);
          height: 113px;
          margin: 18px 14px 21px;
          padding-bottom: 8px;
          border-radius: 22px;
          background: linear-gradient(175deg, #0487c8 60%, #1c92ce);
          box-shadow: 0 8px 16px rgba(0, 0, 0, 0.28);
          color: #fff;
          font-size: 39px;
          font-weight: 500;
     }
     .send::before {
          content: "";
          position: absolute;
          inset: 0;
          background: linear-gradient(20deg, rgba(255, 255, 255, 0) 50%, rgba(255, 255, 255, 0.2));
          clip-path: polygon(10% 0, 52% 0, 50% 70%);
     }
     h3 {
          padding-bottom: 8px;
          border: solid #ddd;
          border-width: 2px 0;
          color: #666;
          font-size: 39px;
          font-weight: 500;
          line-height: 96px;
     }
     .stop {
          display: flex;
          gap: 17px;
     }
     h4, p {
          font-size: 34px;
     }
     h4 {
          margin-bottom: 2px;
          color: #000;
          line-height: 52px;
     }
     p {
          color: #666;
          line-height: 46px;
     }
     nav {
          padding: 36px 0 21px;
          background: #fff;
     }
     .tabs {
          display: grid;
          grid-template-columns: repeat(5, 1fr);
     }
     a {
          display: grid;
          justify-items: center;
          gap: 10px;
          color: #999;
          text-decoration: none;
     }
     .icon {
          display: grid;
          place-items: center;
          height: 58px;
     }
     .icon svg {
          fill: currentColor;
     }
     .label {
          height: 28px;
          overflow: hidden;
          color: #777;
          font-size: 30px;
          line-height: 44px;
     }
     .active, .active .label {
          color: #0588c8;
     }
     .home-bar {
          width: 320px;
          height: 13px;
          margin: 41px auto 0;
          border-radius: 7px;
          background: #000;
     }
</style>
